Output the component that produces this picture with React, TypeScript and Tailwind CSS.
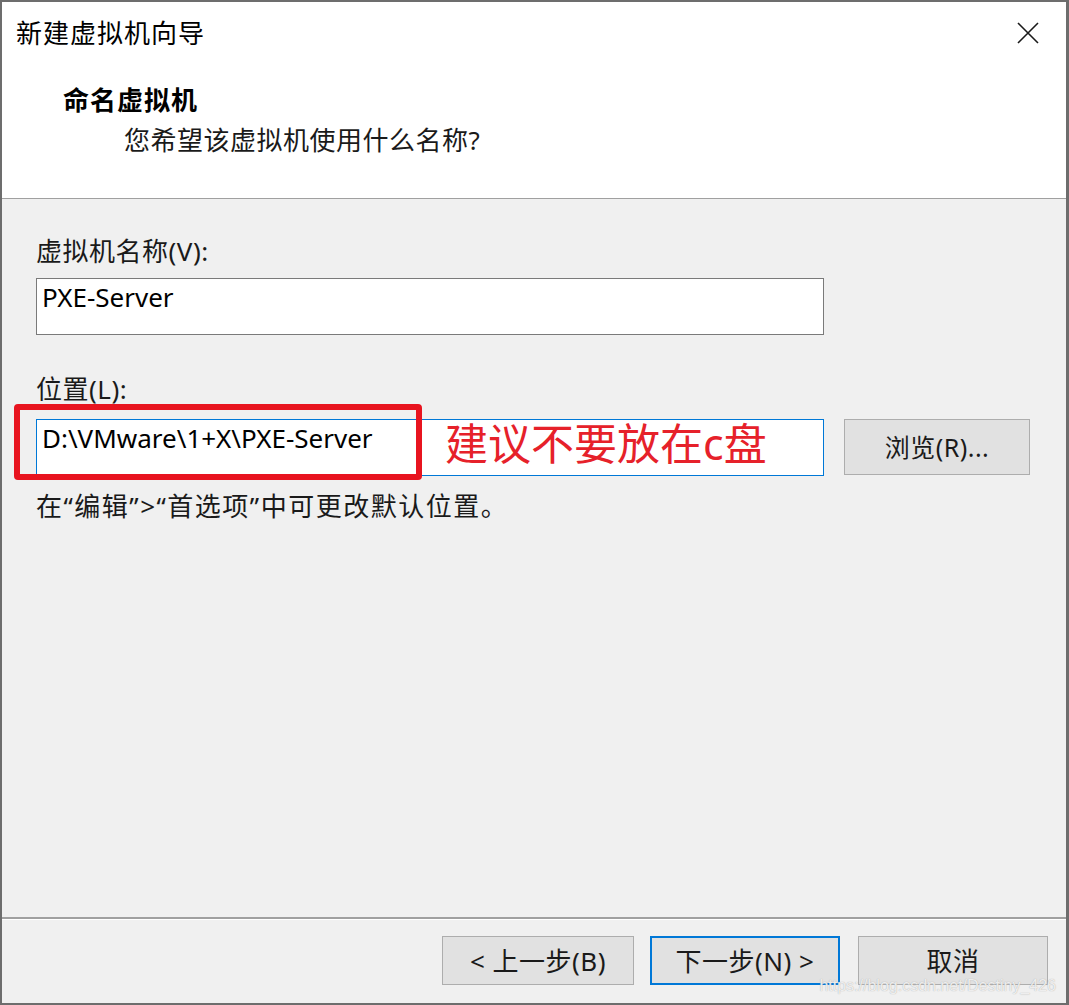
const font = { fontFamily: '"Noto Sans", "Noto Sans CJK SC", sans-serif' };

function WinButton({ label, primary, width }: { label: string; primary?: boolean; width: string }) {
  return (
    <div
      className={`flex h-[49px] ${width} items-center justify-center bg-[#e1e1e1] text-[26px] leading-none tracking-[0.5px] text-[#1a1a1a] ${
        primary ? 'border-2 border-[#0078d7]' : 'border border-[#adadad]'
      }`}
    >
      {label}
    </div>
  );
}

export default function App() {
  return (
    <div
      className="relative flex h-[1005px] w-[1069px] flex-col border-2 border-r-[3px] border-[#6d6d6d] bg-[#f0f0f0] text-black"
      style={font}
    >
      {/* header */}
      <div className="h-[197px] border-b border-[#a0a0a0] bg-white">
        <div className="flex items-start justify-between pl-[14px] pr-[27px] pt-[15px]">
          <div className="text-[26px] leading-[32px] tracking-[1px]">新建虚拟机向导</div>
          <svg className="mt-[5px]" width="22" height="22" viewBox="0 0 22 22">
            <path d="M1 1 L21 21 M21 1 L1 21" stroke="#1a1a1a" strokeWidth="1.6" />
          </svg>
        </div>
        <div className="pl-[61px] pt-[35px] text-[26px] font-bold leading-[32px] tracking-[1px]">命名虚拟机</div>
        <div className="pl-[122px] pt-[8px] text-[26px] leading-[32px] tracking-[0.5px] text-[#1a1a1a]">
          您希望该虚拟机使用什么名称?
        </div>
      </div>

      {/* body */}
      <div className="flex-1 pl-[34px]">
        <div className="pt-[36px] text-[26px] leading-[32px] tracking-[0.5px] text-[#1a1a1a]">虚拟机名称(V):</div>
        <div className="mt-[11px] h-[57px] w-[788px] border border-[#7a7a7a] bg-white px-[5px] pt-[2px] text-[26px] leading-[32px]">
          PXE-Server
        </div>
        <div className="pt-[38px] text-[26px] leading-[32px] tracking-[0.5px] text-[#1a1a1a]">位置(L):</div>
        <div className="relative mt-[14px] flex items-start gap-[20px]">
          <div className="relative h-[57px] w-[788px] border border-[#0078d7] bg-white px-[5px] pt-[2px] text-[26px] leading-[32px]">
            D:\VMware\1+X\PXE-Server
            <div className="absolute left-[408px] top-[-4px] text-[43px] leading-[56px] text-[#e6212a]">建议不要放在c盘</div>
          </div>
          <div className="flex h-[56px] w-[186px] items-center justify-center border border-[#adadad] bg-[#e1e1e1] text-[25px] leading-none tracking-[0.5px] text-[#1a1a1a]">
            浏览(R)...
          </div>
          {/* red annotation box */}
          <div className="absolute left-[-22px] top-[-15px] h-[76px] w-[408px] rounded-[4px] border-[6px] border-[#e8141f]" />
        </div>
        <div className="pt-[14px] text-[26px] leading-[32px] tracking-[1.5px] text-[#1a1a1a]">
          在“编辑”&gt;“首选项”中可更改默认位置。
        </div>
      </div>

      {/* footer */}
      <div className="h-[86px] border-t-2 border-t-[#a0a0a0] shadow-[inset_0_1px_0_#ffffff]">
        <div className="flex justify-end pr-[18px] pt-[17px]">
          <WinButton label="< 上一步(B)" width="w-[192px]" />
          <div className="w-[16px]" />
          <WinButton label="下一步(N) >" width="w-[190px]" primary />
          <div className="w-[18px]" />
          <WinButton label="取消" width="w-[190px]" />
        </div>
      </div>

      <div
        className="absolute bottom-[9px] right-[10px] text-[16px] leading-none text-white/80"
        style={{ fontFamily: '"Liberation Sans", sans-serif', textShadow: '0 0 1px #9a9a9a' }}
      >
        https://blog.csdn.net/Destiny_426
      </div>
    </div>
  );
}
